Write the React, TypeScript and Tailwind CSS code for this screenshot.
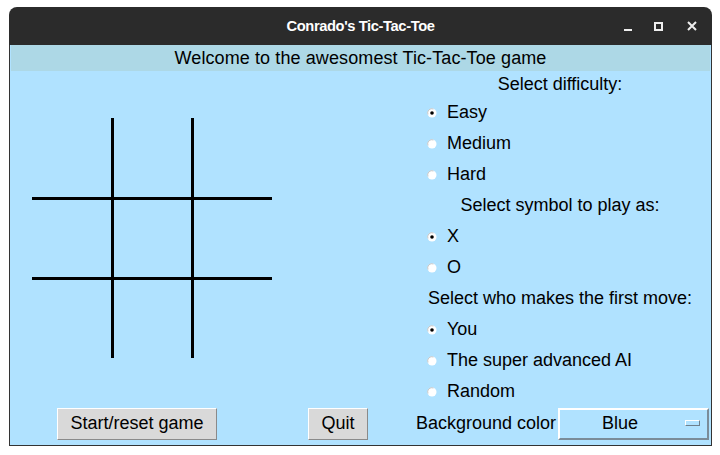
import React from "react";

function Radio({ checked }: { checked: boolean }) {
  return (
    <svg width="10" height="10" viewBox="0 0 10 10" className="shrink-0">
      <circle cx="5" cy="5" r="4.5" fill="#ffffff" />
      <path d="M1 6.5 A4.2 4.2 0 0 1 6.5 1" stroke="#c8c8c8" strokeWidth="1" fill="none" />
      {checked && <circle cx="5" cy="5" r="1.8" fill="#000000" />}
    </svg>
  );
}

function Opt({ label, checked }: { label: string; checked?: boolean }) {
  return (
    <div className="h-[31px] flex items-center pl-[13px] pt-[2px] gap-[10px]">
      <Radio checked={!!checked} />
      <span>{label}</span>
    </div>
  );
}

function Label({ text, first }: { text: string; first?: boolean }) {
  return (
    <div className={`${first ? "h-[25px]" : "h-[31px]"} flex items-center justify-center pt-[2px] pl-[2px]`}>
      {text}
    </div>
  );
}

export default function App() {
  return (
    <div className="w-[720px] h-[455px] bg-white overflow-hidden">
      <div className="ml-[9px] mt-[7px] w-[703px] h-[439px] flex flex-col">
        {/* title bar */}
        <div className="h-[38px] bg-[#2b2b2b] rounded-t-[8px] relative flex items-center justify-center">
          <span className="text-white font-bold text-[15px] tracking-[-0.4px] scale-x-[0.98]" style={{ fontFamily: '"Liberation Sans", Arial, sans-serif' }}>
            Conrado's Tic-Tac-Toe
          </span>
          <div className="absolute right-[15px] top-[14px] flex items-center text-white">
            <div className="w-[8px] h-[9px] flex items-end"><div className="w-[8px] h-[2px] bg-[#eeeeee]" /></div>
            <div className="ml-[22px] w-[9px] h-[9px] border-[2px] border-[#eeeeee]" />
            <svg width="10" height="10" viewBox="0 0 10 10" className="ml-[24px]">
              <path d="M1 1 L9 9 M9 1 L1 9" stroke="#eeeeee" strokeWidth="2" />
            </svg>
          </div>
        </div>
        {/* content */}
        <div
          className="flex-1 bg-[#b0e2ff] border-x border-b border-[#333333] flex flex-col text-[18px] text-black"
          style={{ fontFamily: '"Liberation Sans", Arial, sans-serif' }}
        >
          <div className="h-[26px] mx-[1px] bg-[#add8e6] flex items-center justify-center tracking-[0.1px]">
            Welcome to the awesomest Tic-Tac-Toe game
          </div>
          <div className="flex h-[335px]">
            <div className="w-[404px] pl-[22px] pt-[47px]">
              <svg width="240" height="240" viewBox="0 0 240 240">
                <rect x="79" y="0" width="3" height="240" fill="#000" />
                <rect x="159" y="0" width="3" height="240" fill="#000" />
                <rect x="0" y="79" width="240" height="3" fill="#000" />
                <rect x="0" y="159" width="240" height="3" fill="#000" />
              </svg>
            </div>
            <div className="w-[290px] flex flex-col">
              <Label text="Select difficulty:" first />
              <Opt label="Easy" checked />
              <Opt label="Medium" />
              <Opt label="Hard" />
              <Label text="Select symbol to play as:" />
              <Opt label="X" checked />
              <Opt label="O" />
              <Label text="Select who makes the first move:" />
              <Opt label="You" checked />
              <Opt label="The super advanced AI" />
              <Opt label="Random" />
            </div>
          </div>
          <div className="flex items-center pt-[2px]">
            <button className="ml-[47px] w-[160px] h-[32px] pb-[2px] bg-[#d9d9d9] border border-t-white border-l-white border-b-[#8a8a8a] border-r-[#8a8a8a] flex items-center justify-center">
              Start/reset game
            </button>
            <button className="ml-[91px] w-[60px] h-[32px] pb-[2px] bg-[#d9d9d9] border border-t-white border-l-white border-b-[#8a8a8a] border-r-[#8a8a8a] flex items-center justify-center">
              Quit
            </button>
            <span className="ml-[48px] pb-[2px]">Background color</span>
            <div className="ml-[2px] w-[151px] h-[32px] pb-[2px] border-2 border-t-white border-l-white border-b-[#7a8c99] border-r-[#7a8c99] flex items-center relative">
              <span className="w-[120px] text-center">Blue</span>
              <div className="absolute right-[7px] top-[10px] w-[15px] h-[6px] border border-t-white border-l-white border-b-[#6e7f8c] border-r-[#6e7f8c]" />
            </div>
          </div>
        </div>
      </div>
    </div>
  );
}
